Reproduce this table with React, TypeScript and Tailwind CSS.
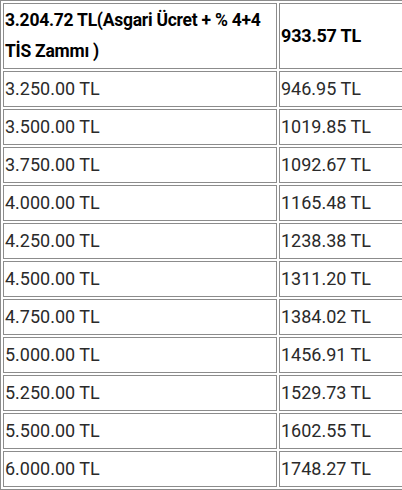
const rows: [string, string][] = [
  ["3.250.00 TL", "946.95 TL"],
  ["3.500.00 TL", "1019.85 TL"],
  ["3.750.00 TL", "1092.67 TL"],
  ["4.000.00 TL", "1165.48 TL"],
  ["4.250.00 TL", "1238.38 TL"],
  ["4.500.00 TL", "1311.20 TL"],
  ["4.750.00 TL", "1384.02 TL"],
  ["5.000.00 TL", "1456.91 TL"],
  ["5.250.00 TL", "1529.73 TL"],
  ["5.500.00 TL", "1602.55 TL"],
  ["6.000.00 TL", "1748.27 TL"],
]

export default function App() {
  return (
    <div className="w-[402px] h-[490px] overflow-hidden bg-white">
      <table
        className="table-fixed w-[440px] min-w-[440px] border-separate border-spacing-[2px] border border-[#8c8c8c] text-[18px] leading-[32px] text-[#2a2a2a]"
        style={{ fontFamily: "Roboto, 'Noto Sans', sans-serif" }}
      >
        <colgroup>
          <col className="w-[274px]" />
          <col />
        </colgroup>
        <tbody>
          <tr>
            <td className="border border-[#8c8c8c] p-px align-middle font-bold text-black text-[17.5px] tracking-[-0.25px] leading-[31px]">
              3.204.72 TL(Asgari Ücret + % 4+4 TİS Zammı )
            </td>
            <td className="border border-[#8c8c8c] p-px align-middle font-bold text-black tracking-[-0.2px]">
              933.57 TL
            </td>
          </tr>
          {rows.map(([a, b]) => (
            <tr key={a}>
              <td className="border border-[#8c8c8c] p-px align-middle">{a}</td>
              <td className="border border-[#8c8c8c] p-px align-middle">{b}</td>
            </tr>
          ))}
        </tbody>
      </table>
    </div>
  )
}
